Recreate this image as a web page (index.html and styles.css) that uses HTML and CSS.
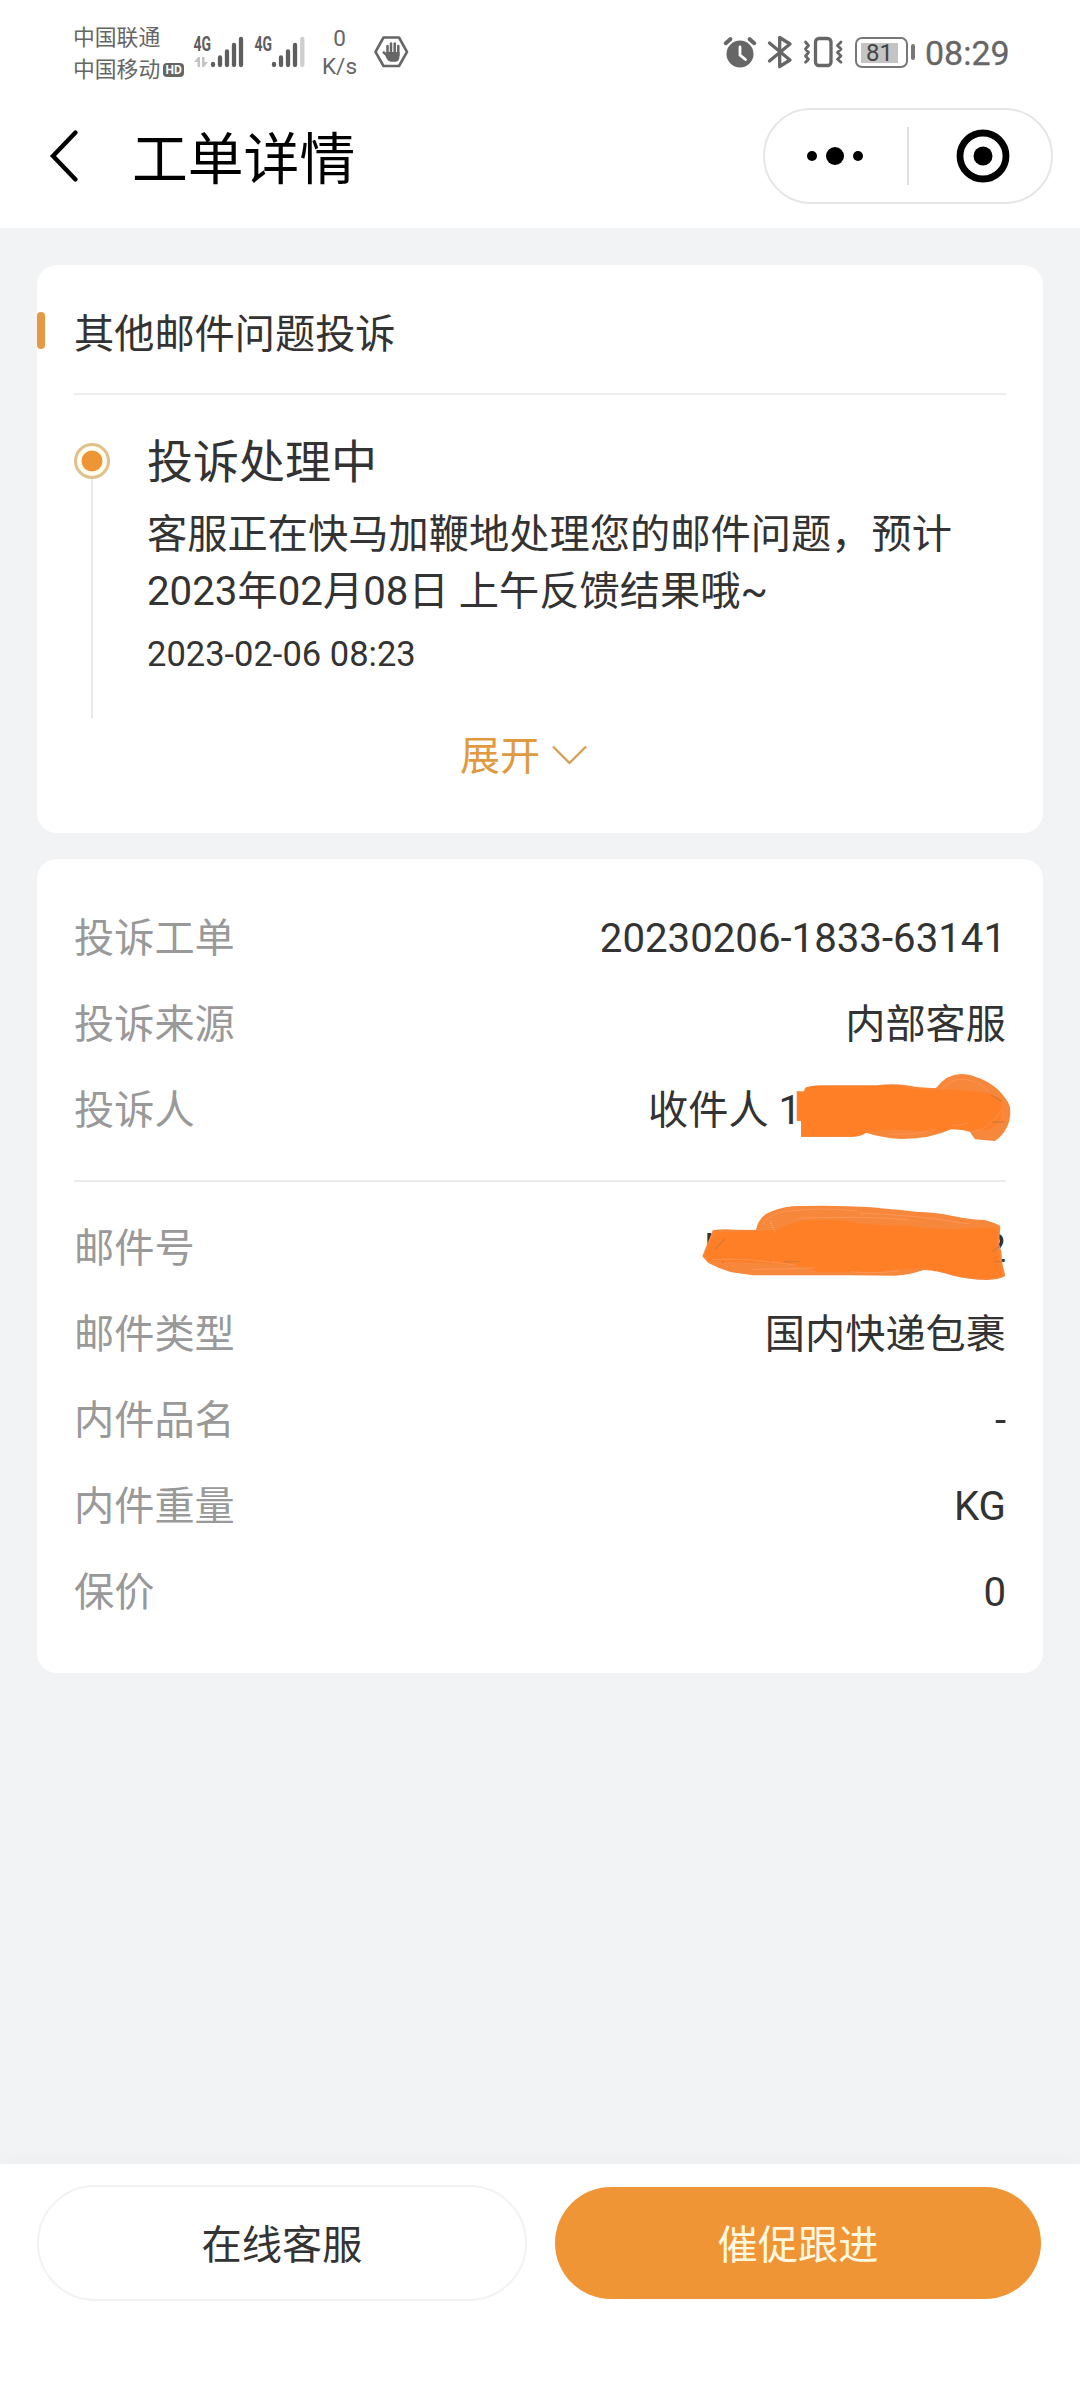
FILE: index.html
```html
<!DOCTYPE html>
<html lang="zh-CN">
<head>
<meta charset="utf-8">
<title>工单详情</title>
<link rel="stylesheet" href="styles.css">
</head>
<body>
<div class="screen">
  <header class="top">
    <div class="status">
      <div class="status-left">
        <div class="carriers">
          <div>中国联通</div>
          <div class="carrier-row">中国移动<span class="hd">HD</span></div>
        </div>
        <svg class="signals" width="116" height="40" viewBox="190 32 116 40">
          <text class="net" x="193.500" y="50.500" textLength="17.500" lengthAdjust="spacingAndGlyphs">4G</text>
          <g fill="#c4c4c4"><path d="M194 62l4-5h2v10h-2.500v-5zM202 57h2.500v5h3.500l-4 5h-2z"/></g>
          <g stroke="#5e5e5e" stroke-width="4.300" stroke-linecap="round">
            <path d="M213 64v1M220 57.500v7.500M227 51.500v13.500M234 45v20M241 39v26"/>
          </g>
          <text class="net" x="254.500" y="50.500" textLength="17.500" lengthAdjust="spacingAndGlyphs">4G</text>
          <g stroke="#5e5e5e" stroke-width="4.300" stroke-linecap="round">
            <path d="M274 64v1M281 57.500v7.500M288 51.500v13.500M295 45v20"/>
            <path d="M302.300 39v26" stroke="#cfcfcf"/>
          </g>
        </svg>
        <div class="speed"><div>0</div><div>K/s</div></div>
        <svg class="hand" width="36" height="34" viewBox="373 35 36 34">
          <path d="M383.500 37.500h15.500l8 14.300-8 14.200h-15.500l-8-14.200z" fill="none" stroke="#666" stroke-width="2.600" stroke-linejoin="round"/>
          <path d="M383.800 52.500l4.500 4" stroke="#666" stroke-width="2.600" stroke-linecap="round"/>
          <path d="M387.500 46v9M391 43.500v10M394.700 43.500v10M398.300 46v9" stroke="#666" stroke-width="2.500" stroke-linecap="round"/>
          <path d="M386.500 52h13v4c0 3.500-1.500 5.700-3.500 5.700h-5c-2.500 0-4.500-2.700-5.500-5.700z" fill="#666"/>
        </svg>
      </div>
      <div class="status-right">
        <svg width="120" height="36" viewBox="723 35 120 36" fill="none" stroke="#666" stroke-width="3.300" stroke-linecap="round">
          <circle cx="740" cy="54" r="13.500" fill="#666" stroke="none"/>
          <path d="M740 47v8l5.500 4.500" stroke="#fff" stroke-width="2.800"/>
          <path d="M725.800 43.200l4.500-4M754.200 43.200l-4.500-4" stroke-width="4"/>
          <path d="M769.500 43l20.500 17-10.300 6.500V37.500L790 44l-20.500 17" stroke-linejoin="round"/>
          <rect x="815.500" y="38.500" width="15.500" height="27" rx="3.500"/>
          <path d="M805.500 42l3 3.500-3 3.500 3 3.500-3 3.500 3 3.200-3 3M841 42l-3.500 3.500 3.500 3.500-3.500 3.500 3.500 3.500-3.500 3.200 3.500 3" stroke-width="2.800" stroke-linejoin="round"/>
        </svg>
        <div class="battery"><span>81</span></div>
        <i class="nub"></i>
        <div class="clock">08:29</div>
      </div>
    </div>
    <div class="nav">
      <svg class="back" width="32" height="56" viewBox="48 128 32 56"><path d="M75.500 132.500L53 156l22.500 23.500" fill="none" stroke="#000" stroke-width="4.400" stroke-linecap="round"/></svg>
      <h1>工单详情</h1>
      <div class="capsule">
        <svg class="dots" width="60" height="20" viewBox="0 0 60 20"><circle cx="7" cy="10" r="5"/><circle cx="30" cy="10" r="9"/><circle cx="53" cy="10" r="5"/></svg>
        <i class="split"></i>
        <svg class="target" width="54" height="54" viewBox="0 0 54 54"><circle cx="27" cy="27" r="23" fill="none" stroke="#000" stroke-width="6.800"/><circle cx="27" cy="27" r="9.500"/></svg>
      </div>
    </div>
  </header>

  <main class="content">
    <section class="card progress">
      <h2 class="card-title">其他邮件问题投诉</h2>
      <div class="step">
        <div class="rail"><i class="node"></i><i class="line"></i></div>
        <div class="step-body">
          <h3>投诉处理中</h3>
          <p class="desc">客服正在快马加鞭地处理您的邮件问题，预计<br>2023年02月08日 上午反馈结果哦~</p>
          <p class="time">2023-02-06 08:23</p>
        </div>
      </div>
      <div class="expand"><span>展开</span><svg width="36" height="22" viewBox="0 0 36 22"><path d="M2 1.500l16.500 16.500L35 1.500" fill="none" stroke="#d69c50" stroke-width="2.200"/></svg></div>
    </section>

    <section class="card details">
      <div class="group first">
        <div class="row"><span class="label">投诉工单</span><span>20230206-1833-63141</span></div>
        <div class="row"><span class="label">投诉来源</span><span>内部客服</span></div>
        <div class="row"><span class="label">投诉人</span>
          <span class="masked person">收件人 1
            <svg class="scribble phone" width="216" height="72" viewBox="466 36 648 216">
              <path fill="#f7873b" d="M471 94h22l3-10q18-8 45-8h170q50-7 90 0 45 10 88 8 33-42 75-42 25 0 42 8 65 20 97 74 14 18 6 58-8 35-43 61l-60-5-15-22q-20-7-57-8-60 29-150 29-60-4-105-19-15 11-40 13H484v-48h-13z"/>
              <path fill="#ff7f27" d="M474 96h22l4-14 40-4h178q40-5 76 2 65 14 130 7l100 10q42 5 60 22v58q-22 35-63 35-30-4-89-5-40 13-100 6-95-11-155 6-15 8-40 9H486v-48h-12z"/>
              <g fill="none" stroke="#ff965b" stroke-width="3" opacity=".75"><path d="M904 91q24-32 56-33 50-2 88 35M750 222q70 5 135-14M1004 213q38 0 82-62M935 196q24 2 50-7"/></g>
              <path d="M1054 105l34 20M1056 186h38" stroke="#c97934" stroke-width="3"/>
            </svg>
          </span>
        </div>
      </div>
      <div class="group">
        <div class="row"><span class="label">邮件号</span>
          <span class="masked parcel"><span>K</span><span>2</span>
            <svg class="scribble code" width="310" height="80" viewBox="183 426 930 240">
              <path fill="#f7873b" d="M218 508q30-5 65-2l65 1q9-43 47-56 42-17 90-16 110-3 210 4 90 9 130 13 65 2 110 12 65 13 99 13 28 7 47 18l-4 55 7 22 3 36 9 36q-15 11-55 13-55-1-102-13-52-16-88-17-43 15-86 17l-133-1H340q-35-5-65-9-40-12-70-28l-18-20z"/>
              <path fill="#ff7f27" d="M224 514l180-6 50-21q70-17 160-7 80 15 170 13 110 14 180 11 65-6 109-4l-4 55 8 24 4 33 7 31q-28 12-68 9-62-4-122-21-55-15-110-6-70 8-120 8H540q-90-30-200-28l-130-4-18-14z"/>
              <g fill="none" stroke="#ff9b62" stroke-width="3" opacity=".75"><path d="M366 493q20-35 70-41 110-15 215-2M475 472q180-8 330 4M660 456q170 6 330 33M216 596q90-7 250 16M335 625q145-1 190-5M630 632q80 8 145-3"/></g>
              <path d="M225 565l30-30M245 600l8 4M282 598v4M336 599v4M390 598v4M430 602h50M1056 572l24-18M1060 602h28" stroke="#dc7931" stroke-width="4"/>
              <path d="M390 480l16 35" stroke="#fff" stroke-width="2" stroke-dasharray="2 5"/>
            </svg>
          </span>
        </div>
        <div class="row"><span class="label">邮件类型</span><span>国内快递包裹</span></div>
        <div class="row"><span class="label">内件品名</span><span>-</span></div>
        <div class="row"><span class="label">内件重量</span><span>KG</span></div>
        <div class="row"><span class="label">保价</span><span>0</span></div>
      </div>
    </section>
  </main>

  <footer class="actions">
    <div class="btn ghost">在线客服</div>
    <div class="btn primary">催促跟进</div>
  </footer>
</div>
</body>
</html>
```
FILE: styles.css
```css
* { box-sizing: border-box; margin: 0; padding: 0; }
body {
  background: #f2f3f5;
  font-family: Roboto, "Noto Sans CJK SC", sans-serif;
  color: #333;
  font-weight: 400;
}
svg { display: block; flex: none; }
h1, h2, h3 { font-weight: 400; }
.screen { width: 1080px; height: 2400px; display: flex; flex-direction: column; }

/* Status bar */
.top { height: 228px; background: #fff; flex: none; }
.status {
  height: 108px;
  display: flex;
  justify-content: space-between;
  padding: 0 72px 0 73px;
  color: #666;
}
.status-left, .status-right { display: flex; align-items: flex-start; }
.carriers { width: 117px; padding-top: 22px; font-size: 21.800px; line-height: 32px; white-space: nowrap; }
.carrier-row { display: flex; align-items: center; }
.hd {
  width: 21px; height: 14px; margin-left: 3px;
  border-radius: 4px; background: #666; color: #fff;
  font-size: 12px; line-height: 14px; font-weight: 700;
  text-align: center;
}
.signals { margin-top: 32px; }
.net { font: 700 19.500px Roboto, sans-serif; fill: #5e5e5e; }
.speed { width: 67px; padding-top: 25px; font-size: 22.500px; line-height: 27.500px; text-align: center; }
.hand { margin-top: 35px; }
.status-right { padding-top: 35px; }
.battery {
  width: 53px; height: 31px; margin: 2px 0 0 12px; padding: 4px;
  border: 2.500px solid #777; border-radius: 7px;
}
.battery span {
  display: block; width: 37px; height: 20px;
  background: #c4c4c4; color: #444;
  font-size: 24px; line-height: 20px; text-align: center;
}
.nub { width: 4px; height: 16px; margin: 9px 10px 0 3px; border-radius: 2px; background: #777; }
.clock { width: 83px; margin-top: -1px; font-size: 34px; line-height: 38px; white-space: nowrap; -webkit-text-stroke: 0.300px #666; }

/* Title bar */
.nav { height: 96px; display: flex; align-items: center; padding: 0 27px 0 48px; }
h1 { margin-left: 52px; font-size: 55.800px; line-height: 80px; color: #000; padding-top: 7px; }
.capsule {
  width: 290px; height: 96px; margin-left: auto;
  border: 2px solid #e6e6e6; border-radius: 48px;
  display: flex; align-items: center; padding: 0 41px 0 40px;
}
.split { width: 2px; height: 58px; margin: 0 auto 0 42px; background: #e0e0e0; }

/* Cards */
.content { flex: 1; padding: 37px 37px 0; display: flex; flex-direction: column; gap: 26px; }
.card { background: #fff; border-radius: 20px; }
.progress { height: 568px; padding: 0 37px; }
.card-title {
  position: relative; height: 130px;
  padding-top: 40px;
  font-size: 40.200px; line-height: 60px;
  border-bottom: 2px solid #eee;
}
.card-title::before {
  content: ""; position: absolute; left: -37px; top: 47px;
  width: 8px; height: 37px; border-radius: 4px; background: #e49a42;
}
.step { display: flex; height: 323px; padding-top: 31px; }
.rail { width: 36px; display: flex; flex-direction: column; align-items: center; padding-top: 17px; }
.node {
  width: 36px; height: 36px; flex: none; border-radius: 50%;
  border: 3px solid #e2c08c;
  background: radial-gradient(circle, #ee9635 0 10px, #fffdf0 10.800px);
}
.line { width: 2px; flex: 1; background: #e8e8e8; }
.step-body { margin-left: 37px; }
h3 { font-size: 46px; line-height: 70px; padding-top: 1px; }
.desc { margin-top: 9px; font-size: 40.250px; line-height: 57px; white-space: nowrap; }
.time { margin-top: 11px; font-size: 34.500px; line-height: 46px; }
.expand {
  display: flex; align-items: center; gap: 11px;
  height: 76px; padding-left: 386px;
  font-size: 40px; line-height: 60px; color: #df9a3f;
}
.expand span { padding-top: 2px; }
.details { height: 814px; padding: 37px 37px 0; }
.row {
  display: flex; justify-content: space-between; align-items: center;
  height: 86px; font-size: 40.200px; line-height: 60px; white-space: nowrap;
}
.label { color: #999; }
.group.first { height: 286px; margin-bottom: 24px; border-bottom: 2px solid #ececec; }
.masked { position: relative; }
.scribble { position: absolute; }
.person { width: 358px; }
.phone { left: 147px; top: -9px; }
.parcel { width: 302px; display: flex; justify-content: space-between; }
.code { left: -3px; top: -16px; }

/* Bottom actions */
.actions {
  height: 236px; flex: none; background: #fff;
  box-shadow: 0 -2px 20px rgba(0, 0, 0, .03);
  display: flex; gap: 28px; align-items: flex-start; padding: 21px 39px 0 37px;
}
.btn { border-radius: 58px; font-size: 40.200px; text-align: center; }
.ghost { width: 490px; height: 116px; border: 2px solid #f2f2f2; line-height: 117px; }
.primary { width: 486px; height: 112px; margin-top: 2px; background: #ef9535; color: #fff8e0; line-height: 117px; }
```
